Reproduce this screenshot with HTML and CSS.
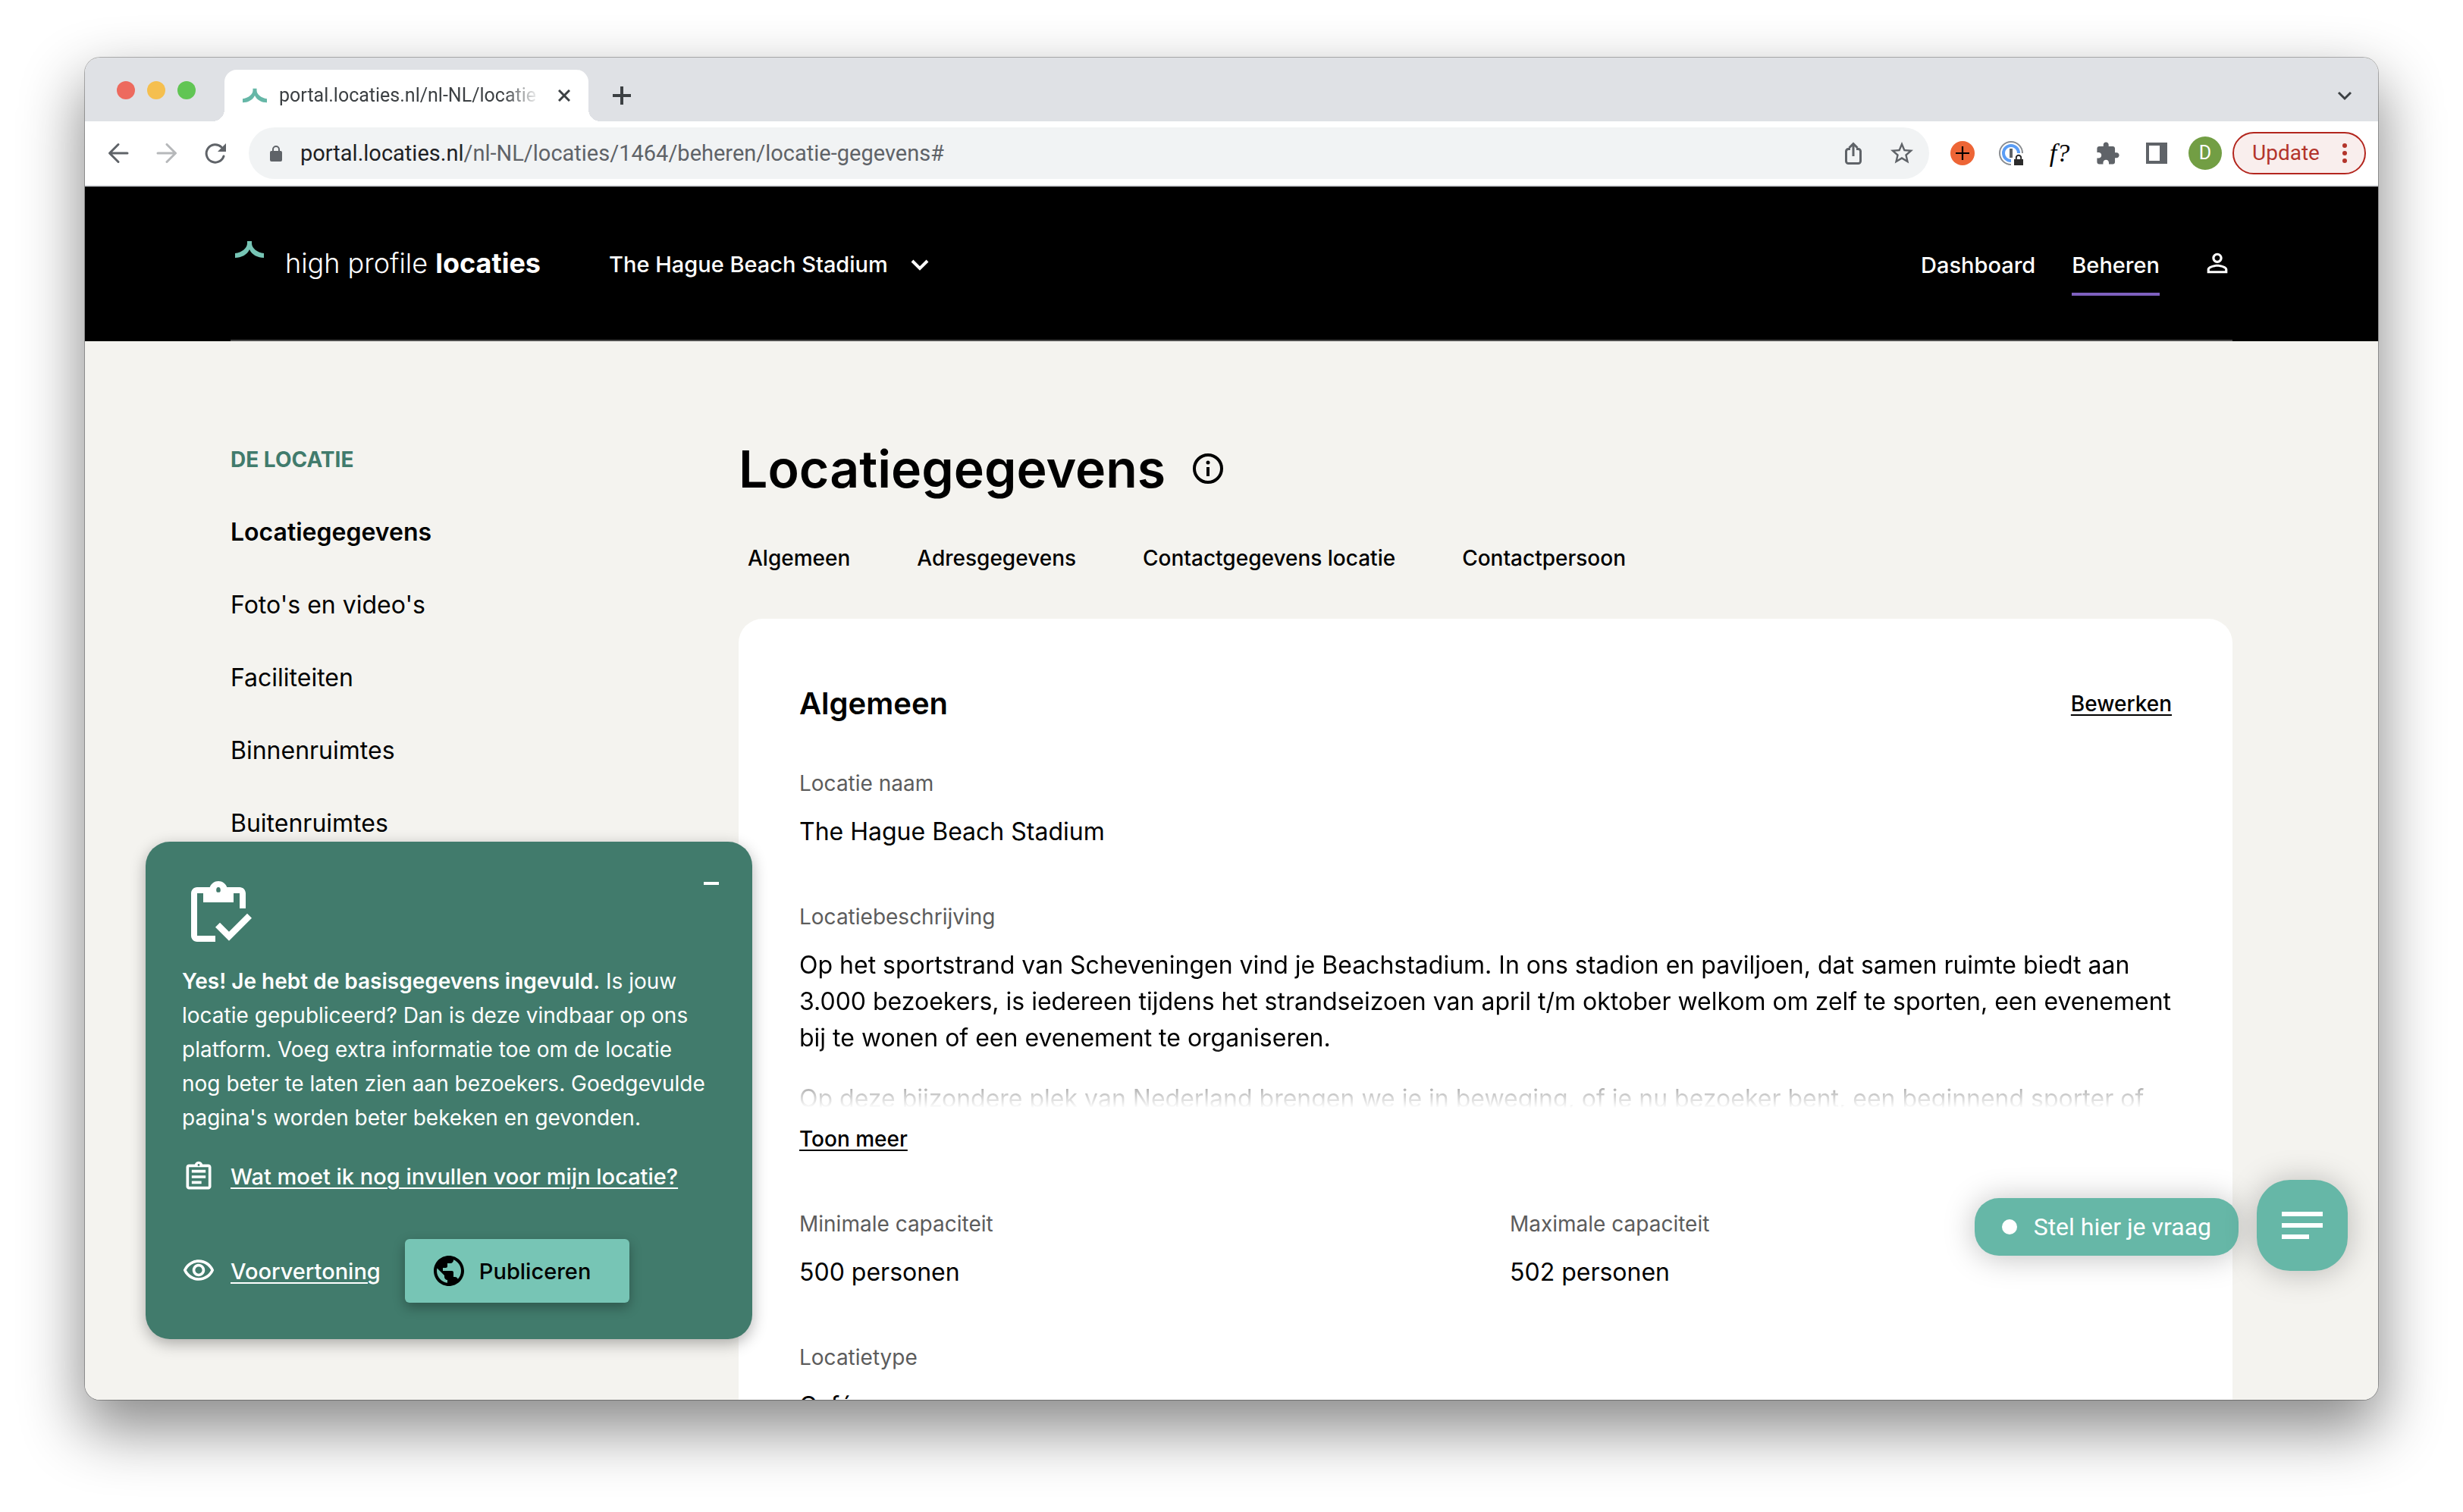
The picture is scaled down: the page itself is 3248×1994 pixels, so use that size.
FILE: index.html
```html
<!DOCTYPE html>
<html lang="nl">
<head>
<meta charset="utf-8">
<meta name="viewport" content="width=device-width, initial-scale=1">
<title>Locatiegegevens</title>
<link rel="stylesheet" href="styles.css">
</head>
<body>
<div class="window">
  <div class="tabstrip">
    <div class="lights">
      <span class="light light-red"></span>
      <span class="light light-yellow"></span>
      <span class="light light-green"></span>
    </div>
    <div class="tab">
      <svg class="favicon" viewBox="0 0 38 22"><path d="M16 0h6v3c0 6 7 12 16 13v6c-8 0-16-4-19-11C16 18 8 22 0 22v-6c9-1 16-7 16-13z"/></svg>
      <span class="tab-title">portal.locaties.nl/nl-NL/locatie</span>
      <button class="plain" aria-label="Tabblad sluiten"><svg class="icon-16" viewBox="0 0 16 16"><path class="line line-3" d="M1 1l14 14M15 1L1 15"/></svg></button>
    </div>
    <button class="plain new-tab" aria-label="Nieuw tabblad"><svg class="icon-24" viewBox="0 0 24 24"><path class="line" d="M12 0v24M0 12h24"/></svg></button>
    <button class="plain tab-search" aria-label="Tabbladen zoeken"><svg class="icon-20" viewBox="0 0 20 20"><path class="line line-3" d="M2 6l8 8 8-8"/></svg></button>
  </div>

  <div class="toolbar">
    <div class="nav-buttons">
      <button class="plain" aria-label="Terug"><svg class="icon-40" viewBox="0 0 40 40"><path class="line line-3 round" d="M32 20H9M20 8.500L8.500 20 20 31.500"/></svg></button>
      <button class="plain faded" aria-label="Vooruit"><svg class="icon-40" viewBox="0 0 40 40"><path class="line line-3 round" d="M8 20h23M20 8.500L31.500 20 20 31.500"/></svg></button>
      <button class="plain" aria-label="Opnieuw laden"><svg class="icon-40" viewBox="0 0 40 40"><path class="line line-3 round" d="M28 12A11.700 11.700 0 1 0 31 24"/><path d="M34 7v11H23z"/></svg></button>
    </div>
    <div class="omnibox">
      <svg class="lock" viewBox="0 0 16 21"><path d="M8 0a5 5 0 0 0-5 5v2H2a2 2 0 0 0-2 2v10a2 2 0 0 0 2 2h12a2 2 0 0 0 2-2V9a2 2 0 0 0-2-2h-1V5a5 5 0 0 0-5-5zm0 2a3 3 0 0 1 3 3v2H5V5a3 3 0 0 1 3-3z"/></svg>
      <div class="url" role="textbox" aria-label="Adres"><span class="url-host">portal.locaties.nl</span>/nl-NL/locaties/1464/beheren/locatie-gegevens#</div>
      <button class="plain" aria-label="Delen"><svg class="icon-32" viewBox="0 0 32 32"><path class="line line-3" d="M12 10.500H9.500a3 3 0 0 0-3 3v13a3 3 0 0 0 3 3h13a3 3 0 0 0 3-3v-13a3 3 0 0 0-3-3H20M16 20V4M10.500 9L16 3.500 21.500 9"/></svg></button>
      <button class="plain" aria-label="Bladwijzer"><svg class="icon-36" viewBox="0 0 24 24"><path d="M22 9.240l-7.190-.620L12 2 9.190 8.630 2 9.240l5.460 4.730L5.820 21 12 17.270 18.180 21l-1.630-7.030L22 9.240zM12 15.400l-3.760 2.270 1-4.280-3.320-2.880 4.380-.380L12 6.100l1.710 4.040 4.380.380-3.320 2.880 1 4.280L12 15.400z"/></svg></button>
    </div>
    <div class="extensions">
      <button class="plain" aria-label="Extensie"><svg class="icon-32" viewBox="0 0 32 32"><circle cx="16" cy="16" r="16" fill="#ed6536"/><path d="M16 7v18M7 16h18" stroke="#000" stroke-width="2.200"/></svg></button>
      <button class="plain" aria-label="1Password"><svg class="icon-32" viewBox="0 0 32 32"><circle cx="16" cy="16" r="15" fill="#fff" stroke="#8a8d91" stroke-width="2"/><circle cx="16" cy="16" r="10" fill="none" stroke="#5b9df5" stroke-width="4"/><path d="M16 22l4-6h12v16H16z" fill="#fff"/><path d="M16 10v12" stroke="#5f6368" stroke-width="4"/><path d="M20 24h12v8H20z" fill="#2b2b2b"/><path d="M22.800 24v-2a3.200 3.200 0 0 1 6.400 0v2" fill="none" stroke="#2b2b2b" stroke-width="2"/></svg></button>
      <button class="plain font-tool" aria-label="Lettertype">f?</button>
      <button class="plain" aria-label="Extensies"><svg class="icon-32" viewBox="1 0 23 23"><path d="M20.500 11H19V7c0-1.100-.900-2-2-2h-4V3.500C13 2.120 11.880 1 10.500 1S8 2.120 8 3.500V5H4c-1.100 0-1.990.900-1.990 2v3.800H3.500c1.490 0 2.700 1.210 2.700 2.700s-1.210 2.700-2.700 2.700H2V20c0 1.100.900 2 2 2h3.800v-1.500c0-1.490 1.210-2.700 2.700-2.700 1.490 0 2.700 1.210 2.700 2.700V22H17c1.100 0 2-.900 2-2v-4h1.500c1.380 0 2.500-1.120 2.500-2.500S21.880 11 20.500 11z"/></svg></button>
      <button class="plain" aria-label="Zijpaneel"><svg class="icon-32" viewBox="0 0 32 32"><path fill-rule="evenodd" d="M2 2h28v28H2zM6 6v20h14V6z"/></svg></button>
      <button class="avatar" aria-label="Profiel">D</button>
    </div>
    <button class="update">Update<svg class="dots" viewBox="0 0 8 28"><circle cx="4" cy="4" r="3"/><circle cx="4" cy="14" r="3"/><circle cx="4" cy="24" r="3"/></svg></button>
  </div>

  <div class="viewport">
    <header class="site-header">
      <div class="header-inner">
        <a class="logo" href="#">
          <svg class="logo-mark" viewBox="0 0 38 22"><path d="M16 0h6v3c0 6 7 12 16 13v6c-8 0-16-4-19-11C16 18 8 22 0 22v-6c9-1 16-7 16-13z"/></svg>
          <span>high profile <b>locaties</b></span>
        </a>
        <button class="plain location-switch">The Hague Beach Stadium<svg class="icon-24" viewBox="0 0 24 24"><path class="line" d="M2 7l10 10L22 7"/></svg></button>
        <nav class="main-nav">
          <a class="nav-link" href="#">Dashboard</a>
          <a class="nav-link current" href="#">Beheren</a>
          <a class="profile" href="#" aria-label="Profiel"><svg class="icon-40" viewBox="0 0 24 24"><path d="M12 5.900c1.160 0 2.100.940 2.100 2.100s-.940 2.100-2.100 2.100S9.900 9.160 9.900 8s.940-2.100 2.100-2.100m0 9c2.970 0 6.100 1.460 6.100 2.100v1.100H5.900V17c0-.640 3.130-2.100 6.100-2.100M12 4C9.790 4 8 5.790 8 8s1.790 4 4 4 4-1.790 4-4-1.790-4-4-4zm0 9c-2.670 0-8 1.340-8 4v3h16v-3c0-2.660-5.330-4-8-4z"/></svg></a>
        </nav>
      </div>
    </header>

    <div class="page">
      <nav class="sidebar">
        <h2 class="side-title">DE LOCATIE</h2>
        <a class="current" href="#">Locatiegegevens</a>
        <a href="#">Foto's en video's</a>
        <a href="#">Faciliteiten</a>
        <a href="#">Binnenruimtes</a>
        <a href="#">Buitenruimtes</a>
      </nav>

      <main class="content">
        <div class="title-row">
          <h1>Locatiegegevens</h1>
          <button class="plain" aria-label="Informatie"><svg class="icon-40" viewBox="0 0 40 40"><circle class="line" cx="20" cy="20" r="18"/><path class="line" d="M20 18v12"/><circle cx="20" cy="12" r="2.500"/></svg></button>
        </div>
        <nav class="anchors">
          <a href="#">Algemeen</a>
          <a href="#">Adresgegevens</a>
          <a href="#">Contactgegevens locatie</a>
          <a href="#">Contactpersoon</a>
        </nav>
        <section class="card">
          <div class="card-head">
            <h2>Algemeen</h2>
            <a class="text-link" href="#">Bewerken</a>
          </div>
          <dl class="fields">
            <div class="field wide"><dt>Locatie naam</dt><dd>The Hague Beach Stadium</dd></div>
            <div class="field wide">
              <dt>Locatiebeschrijving</dt>
              <dd class="description">
                <p>Op het sportstrand van Scheveningen vind je Beachstadium. In ons stadion en paviljoen, dat samen ruimte biedt aan 3.000 bezoekers, is iedereen tijdens het strandseizoen van april t/m oktober welkom om zelf te sporten, een evenement bij te wonen of een evenement te organiseren.</p>
                <p>Op deze bijzondere plek van Nederland brengen we je in beweging, of je nu bezoeker bent, een beginnend sporter of</p>
              </dd>
              <dd class="more"><button class="plain text-link">Toon meer</button></dd>
            </div>
            <div class="field"><dt>Minimale capaciteit</dt><dd>500 personen</dd></div>
            <div class="field"><dt>Maximale capaciteit</dt><dd>502 personen</dd></div>
            <div class="field wide"><dt>Locatietype</dt><dd>Café</dd></div>
          </dl>
        </section>
      </main>
    </div>

    <aside class="notice">
      <button class="plain minimise" aria-label="Minimaliseren"><svg class="icon-20" viewBox="0 0 20 20"><path class="line" d="M0 10h20"/></svg></button>
      <svg class="notice-icon" viewBox="0 0 24 24"><path d="M5 5h2v3h10V5h2v5h2V5c0-1.100-.900-2-2-2h-4.180C14.400 1.840 13.300 1 12 1s-2.400.840-2.820 2H5c-1.100 0-2 .900-2 2v14c0 1.100.900 2 2 2h6v-2H5V5zm7-2c.550 0 .700.450.700 1s-.150.700-.700.700-.700-.150-.700-.700.150-1 .700-1z"/><path d="M21.500 11.700l1.500 1.500-7.500 7.500-4.500-4.500 1.500-1.500 3 3z"/></svg>
      <p><b>Yes! Je hebt de basisgegevens ingevuld.</b> Is jouw locatie gepubliceerd? Dan is deze vindbaar op ons platform. Voeg extra informatie toe om de locatie nog beter te laten zien aan bezoekers. Goedgevulde pagina's worden beter bekeken en gevonden.</p>
      <a class="icon-link" href="#"><svg class="icon-44" viewBox="0 0 24 24"><path d="M7 15h7v2H7zm0-4h10v2H7zm0-4h10v2H7zm12-4h-4.180C14.400 1.840 13.300 1 12 1c-1.300 0-2.400.840-2.820 2H5c-1.100 0-2 .900-2 2v14c0 1.100.900 2 2 2h14c1.100 0 2-.900 2-2V5c0-1.100-.900-2-2-2zm-7-.250c.410 0 .750.340.750.750s-.340.750-.750.750-.750-.340-.750-.750.340-.750.750-.750zM19 19H5V5h14v14z"/></svg><span>Wat moet ik nog invullen voor mijn locatie?</span></a>
      <div class="notice-actions">
        <a class="icon-link" href="#"><svg class="icon-44" viewBox="0 0 24 24"><path d="M12 6c3.790 0 7.170 2.130 8.820 5.500C19.170 14.870 15.790 17 12 17s-7.170-2.130-8.820-5.500C4.830 8.130 8.210 6 12 6m0-2C7 4 2.730 7.110 1 11.500 2.730 15.890 7 19 12 19s9.270-3.110 11-7.500C21.270 7.110 17 4 12 4zm0 5c1.380 0 2.500 1.120 2.500 2.500S13.380 14 12 14s-2.500-1.120-2.500-2.500S10.620 9 12 9m0-2c-2.480 0-4.500 2.020-4.500 4.500S9.520 16 12 16s4.500-2.020 4.500-4.500S14.480 7 12 7z"/></svg><span>Voorvertoning</span></a>
        <button class="publish"><svg class="icon-48" viewBox="0 0 24 24"><path d="M12 2C6.480 2 2 6.480 2 12s4.480 10 10 10 10-4.480 10-10S17.520 2 12 2zm-1 17.930c-3.950-.490-7-3.850-7-7.930 0-.620.080-1.210.210-1.790L9 15v1c0 1.100.900 2 2 2v1.930zm6.900-2.540c-.260-.810-1-1.390-1.900-1.390h-1v-3c0-.550-.450-1-1-1H8v-2h2c.550 0 1-.450 1-1V7h2c1.100 0 2-.900 2-2v-.410c2.930 1.190 5 4.060 5 7.410 0 2.080-.800 3.970-2.100 5.390z"/></svg>Publiceren</button>
      </div>
    </aside>

    <div class="chat">
      <button class="chat-label"><span class="chat-dot"></span>Stel hier je vraag</button>
      <button class="chat-open" aria-label="Chat openen"><svg class="chat-icon" viewBox="0 0 54 36"><path d="M0 0h54v6H0zM0 15h54v6H0zM0 30h36v6H0z"/></svg></button>
    </div>
  </div>
</div>
</body>
</html>
```

FILE: styles.css
```css
* { box-sizing: border-box; margin: 0; padding: 0; }

body {
  height: 100vh;
  padding: 76px 112px 148px;
  overflow: hidden;
  background: #fff;
  color: #000;
  font-family: Inter, "Liberation Sans", sans-serif;
  font-size: 32px;
  line-height: 48px;
}

a { color: inherit; text-decoration: none; }
svg { display: block; flex: none; fill: currentColor; }
.line { fill: none; stroke: currentColor; stroke-width: 4; }
.line-3 { stroke-width: 3; }
.round { stroke-linecap: round; stroke-linejoin: round; }
.icon-16 { width: 16px; height: 16px; }
.icon-20 { width: 20px; height: 20px; }
.icon-24 { width: 24px; height: 24px; }
.icon-32 { width: 32px; height: 32px; }
.icon-36 { width: 36px; height: 36px; }
.icon-40 { width: 40px; height: 40px; }
.icon-44 { width: 44px; height: 44px; }
.icon-48 { width: 48px; height: 48px; }
button { font: inherit; color: inherit; border: 0; cursor: pointer; }
.plain { background: none; }

/* browser window */
.window {
  display: flex;
  flex-direction: column;
  height: 100%;
  overflow: hidden;
  border-radius: 20px;
  background: #fff;
  box-shadow: 0 0 0 1px rgba(0, 0, 0, .28), 0 36px 80px 4px rgba(0, 0, 0, .46);
}

.tabstrip {
  display: flex;
  align-items: flex-end;
  flex: none;
  height: 84px;
  padding: 0 34px 0 42px;
  background: #dfe1e5;
  color: #3c4043;
  font-family: Roboto, sans-serif;
}
.lights { display: flex; gap: 16px; padding-bottom: 29px; }
.light { width: 24px; height: 24px; border-radius: 50%; }
.light-red { background: #ed6a5e; }
.light-yellow { background: #f5bf4f; }
.light-green { background: #61c554; }
.tab {
  position: relative;
  display: flex;
  align-items: center;
  width: 480px;
  height: 68px;
  margin-left: 38px;
  padding: 0 24px;
  border-radius: 16px 16px 0 0;
  background: #fff;
}
.tab::before, .tab::after {
  content: "";
  position: absolute;
  bottom: 0;
  width: 16px;
  height: 16px;
}
.tab::before { right: 100%; background: radial-gradient(circle at 0 0, transparent 16px, #fff 16px); }
.tab::after { left: 100%; background: radial-gradient(circle at 100% 0, transparent 16px, #fff 16px); }
.favicon { width: 32px; height: 20px; margin-right: 16px; color: #66b7a7; }
.tab-title {
  flex: 1;
  overflow: hidden;
  margin-right: 24px;
  font-size: 25px;
  white-space: nowrap;
  -webkit-mask-image: linear-gradient(90deg, #000 86%, transparent);
  mask-image: linear-gradient(90deg, #000 86%, transparent);
}
.new-tab { margin: 0 auto 22px 32px; }
.tab-search { padding-bottom: 24px; }

.toolbar {
  display: flex;
  align-items: center;
  flex: none;
  height: 86px;
  padding: 0 16px 0 24px;
  border-bottom: 2px solid #dadce0;
  color: #5f6368;
  font-family: Roboto, sans-serif;
  font-size: 29px;
}
.nav-buttons { display: flex; gap: 24px; }
.faded { opacity: .45; }
.omnibox {
  display: flex;
  align-items: center;
  flex: 1;
  gap: 30px;
  height: 68px;
  margin-left: 24px;
  padding: 0 18px 0 28px;
  border-radius: 34px;
  background: #f1f3f4;
}
.lock { width: 16px; height: 21px; }
.url { flex: 1; margin-left: -6px; white-space: nowrap; }
.url-host { color: #202124; }
.extensions { display: flex; align-items: center; gap: 32px; margin-left: 28px; }
.font-tool {
  width: 32px;
  color: #000;
  font-family: "Liberation Serif", serif;
  font-size: 34px;
  font-style: italic;
}
.avatar {
  width: 44px;
  height: 44px;
  border-radius: 50%;
  background: #729e44;
  color: #fff;
  font-size: 25px;
  line-height: 44px;
}
.extensions .avatar { margin-left: -6px; }
.update {
  display: flex;
  align-items: center;
  justify-content: space-between;
  width: 176px;
  height: 56px;
  margin-left: 14px;
  padding: 0 22px 0 24px;
  border: 2px solid #b3261e;
  border-radius: 28px;
  background: #f9eeed;
  color: #b3342b;
  font-size: 28px;
}
.dots { width: 8px; height: 28px; }

/* site */
.viewport {
  position: relative;
  flex: 1;
  overflow: hidden;
  background: #f4f3ef;
}
.site-header { padding: 0 192px; background: #000; color: #fff; }
.header-inner {
  display: flex;
  align-items: center;
  height: 204px;
  border-bottom: 2px solid #4d4d4d;
  font-size: 29px;
  font-weight: 500;
}
.logo {
  display: flex;
  gap: 28px;
  padding-left: 6px;
  font-size: 36px;
  font-weight: 300;
  line-height: 58px;
}
.logo-mark { width: 38px; height: 22px; color: #77c5b5; }
.logo b { font-weight: 700; }
.location-switch { display: flex; align-items: center; gap: 30px; margin-left: 90px; padding-top: 4px; }
.main-nav { display: flex; align-items: center; gap: 48px; margin-left: auto; }
.nav-link { padding: 22px 0 12px; border-bottom: 4px solid transparent; }
.nav-link.current { border-color: #7e60bf; }
.profile { margin-left: 8px; }

.page { display: flex; padding: 0 192px; }
.sidebar {
  display: flex;
  flex: none;
  flex-direction: column;
  gap: 48px;
  width: 670px;
  padding-top: 132px;
}
.side-title { color: #417b6c; font-size: 28px; font-weight: 700; }
.sidebar .current { font-weight: 600; }

.content { flex: 1; padding-top: 120px; }
.title-row { display: flex; align-items: center; gap: 36px; }
h1 { font-size: 68px; font-weight: 600; line-height: 96px; }
.anchors {
  display: flex;
  gap: 88px;
  padding: 46px 12px 56px;
  font-size: 28px;
  font-weight: 500;
}
.card { padding: 80px; border-radius: 32px; background: #fff; }
.card-head { display: flex; align-items: center; justify-content: space-between; }
.card-head h2 { font-size: 40px; font-weight: 600; line-height: 64px; }
.text-link {
  font-size: 28px;
  font-weight: 500;
  text-decoration: underline;
  text-decoration-thickness: 2px;
  text-underline-offset: 4px;
}
.fields {
  display: grid;
  grid-template-columns: 1fr 1fr;
  gap: 64px;
  margin-top: 49px;
}
.wide { grid-column: 1 / -1; }
dt { margin-bottom: 16px; color: #5c5c5c; font-size: 28px; }
.description {
  height: 212px;
  overflow: hidden;
  -webkit-mask-image: linear-gradient(#000 60%, transparent);
  mask-image: linear-gradient(#000 60%, transparent);
}
.description p { margin-bottom: 32px; }
.more { padding-top: 16px; }

.notice {
  position: absolute;
  bottom: 80px;
  left: 80px;
  width: 800px;
  padding: 48px;
  border-radius: 32px;
  background: #417b6c;
  box-shadow: 0 6px 20px rgba(0, 0, 0, .3);
  color: #fff;
  font-size: 28px;
  line-height: 45px;
}
.notice b { font-weight: 600; }
.notice-icon { width: 96px; height: 96px; margin-bottom: 18px; }
.minimise { position: absolute; top: 45px; right: 44px; }
.icon-link { display: flex; align-items: center; gap: 20px; font-size: 29px; font-weight: 500; }
.icon-link span { text-decoration: underline; text-decoration-thickness: 2px; text-underline-offset: 4px; }
.notice > .icon-link { margin-top: 32px; }
.notice-actions { display: flex; align-items: center; gap: 32px; margin-top: 60px; }
.publish {
  display: flex;
  align-items: center;
  gap: 16px;
  width: 296px;
  height: 84px;
  padding: 0 34px;
  border-radius: 6px;
  background: #77c5b5;
  box-shadow: 0 6px 16px rgba(0, 0, 0, .3);
  color: #000;
  font-size: 29px;
  font-weight: 500;
}

.chat {
  position: absolute;
  right: 40px;
  bottom: 170px;
  display: flex;
  align-items: center;
  gap: 24px;
  color: #fff;
  font-family: Roboto, sans-serif;
}
.chat-label, .chat-open {
  background: #66b7a7;
  box-shadow: 0 2px 40px rgba(0, 0, 0, .25);
}
.chat-label {
  display: flex;
  align-items: center;
  gap: 22px;
  height: 76px;
  margin-top: 4px;
  padding: 0 36px;
  border-radius: 32px;
  font-size: 32px;
}
.chat-dot { width: 20px; height: 20px; border-radius: 50%; background: #fff; }
.chat-open {
  display: flex;
  align-items: center;
  justify-content: center;
  width: 120px;
  height: 120px;
  border-radius: 44px;
}
.chat-icon { width: 54px; height: 36px; }
```
